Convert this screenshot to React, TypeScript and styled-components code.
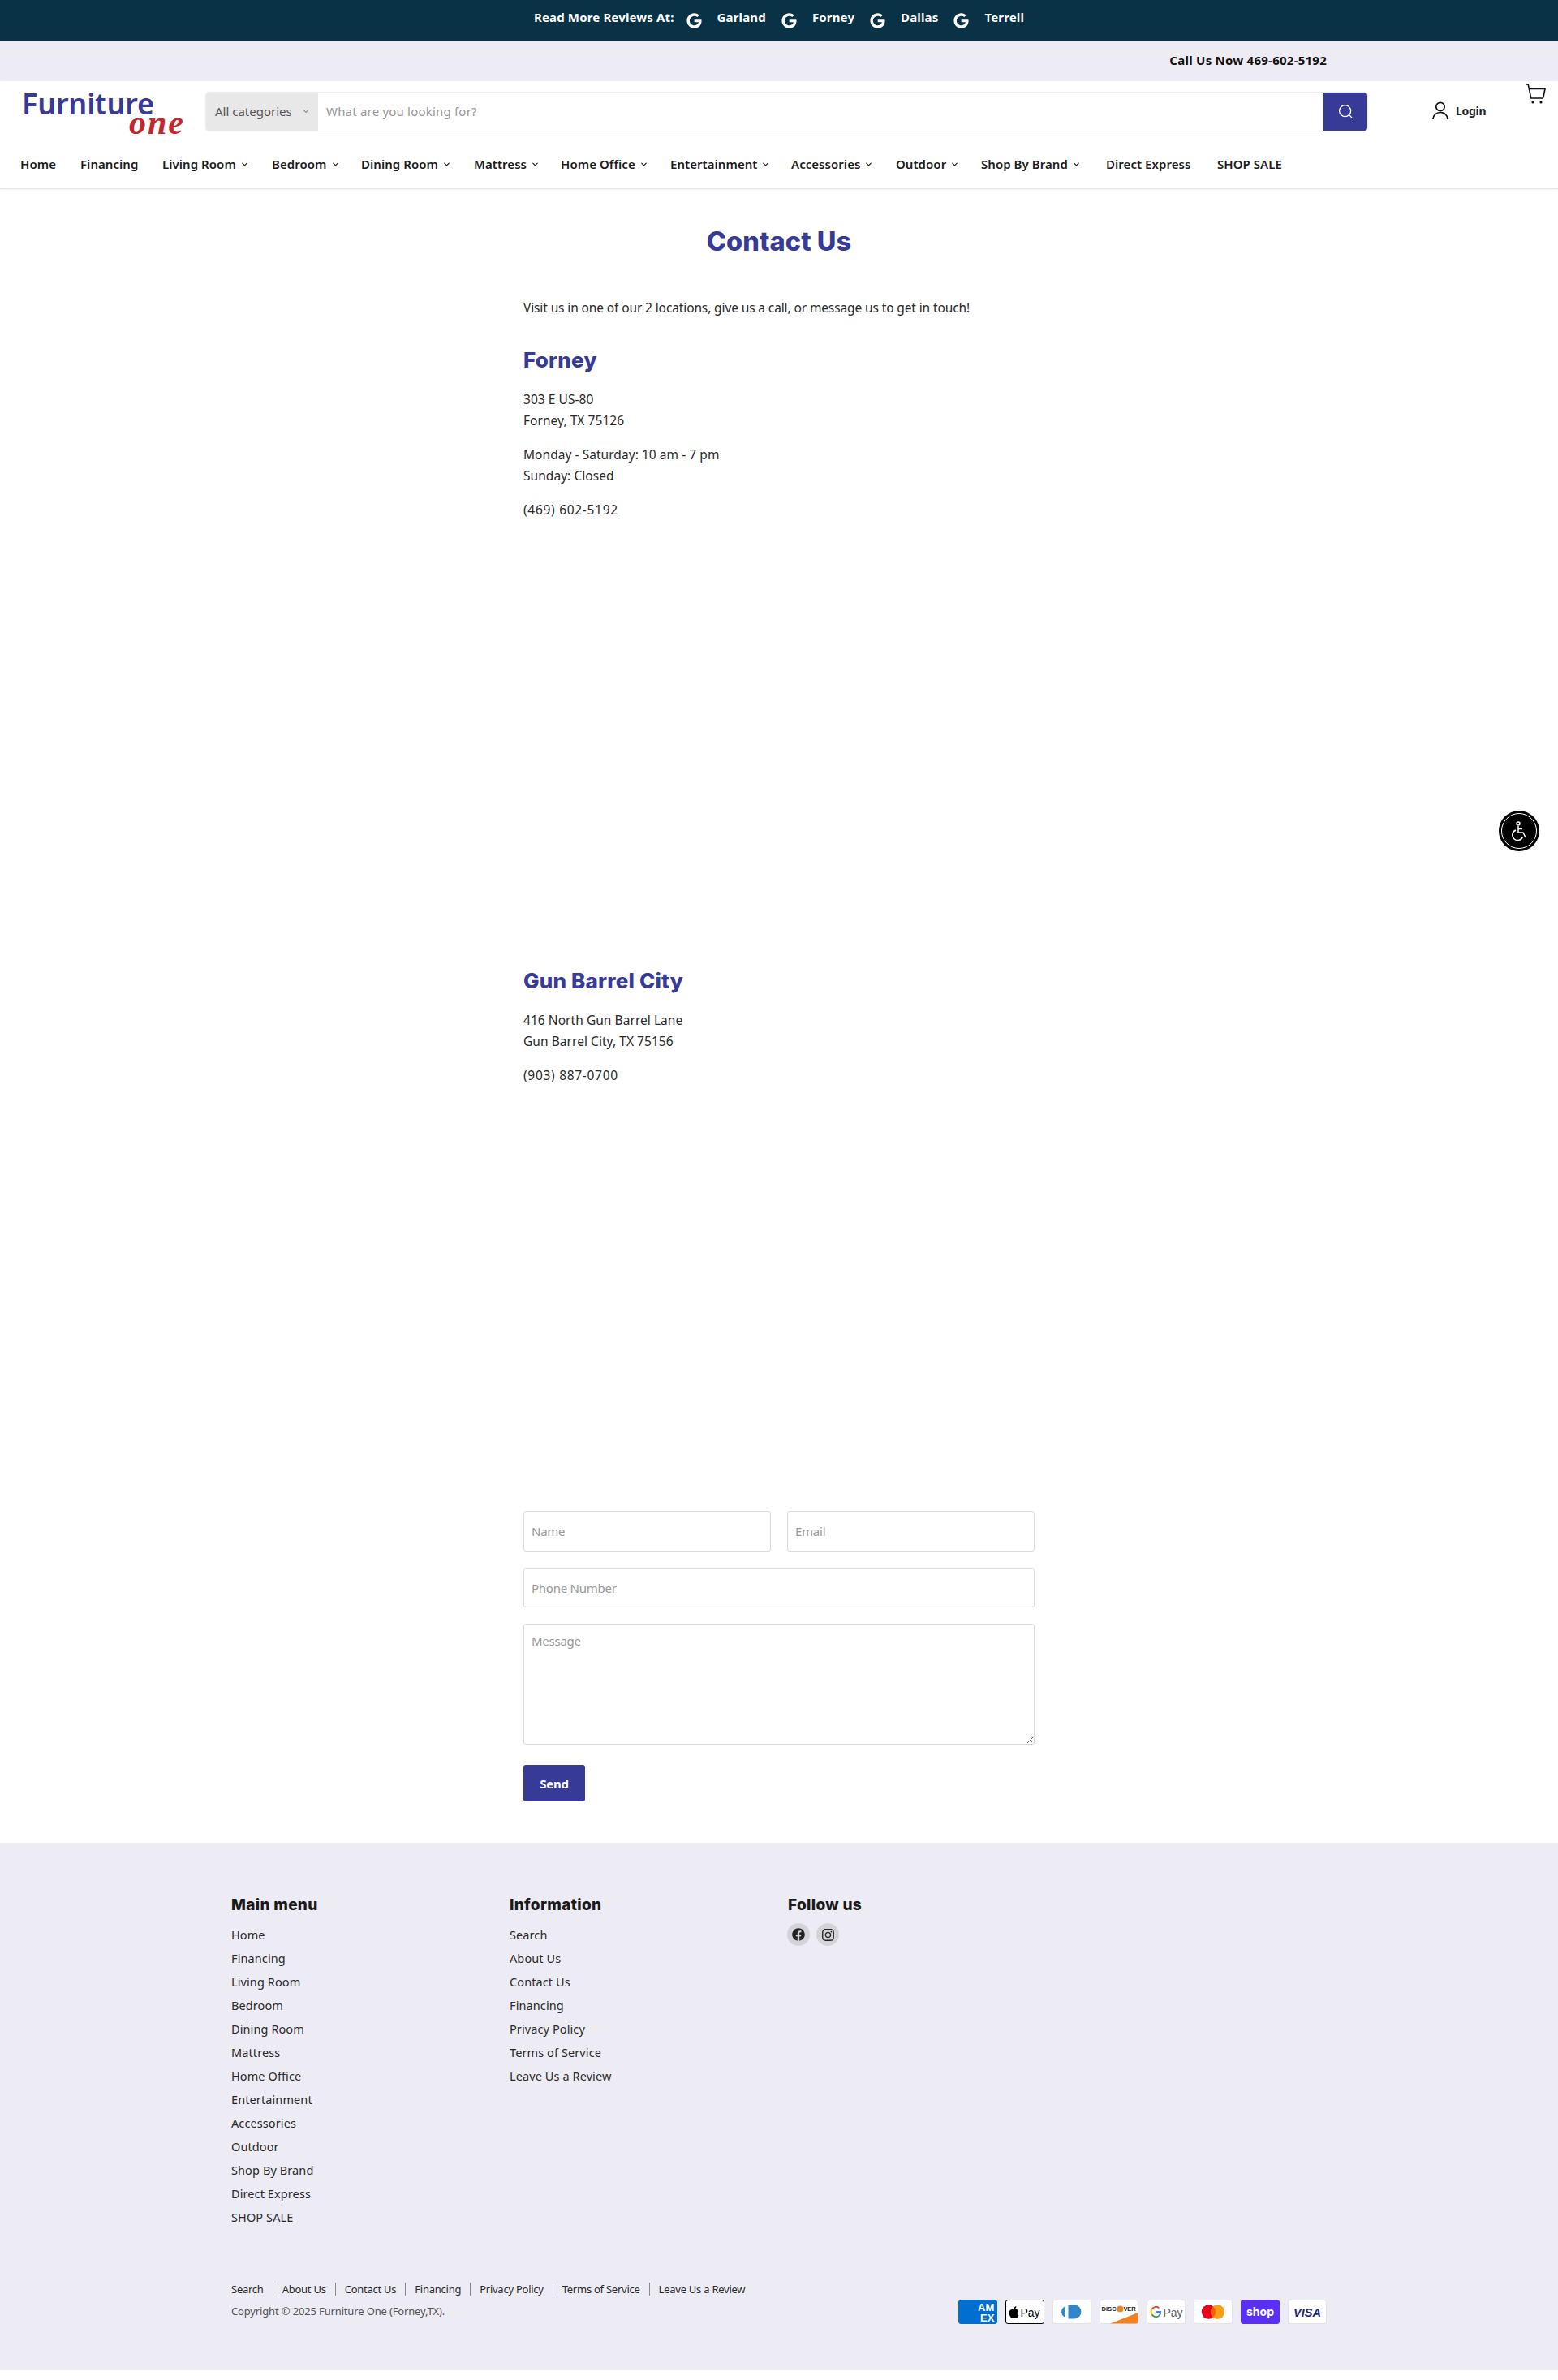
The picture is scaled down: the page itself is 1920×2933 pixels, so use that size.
import { ReactNode } from "react";
import styled, { createGlobalStyle } from "styled-components";
import { FaFacebook, FaGoogle, FaInstagram } from "react-icons/fa";
import { ChevronDown, Search as SearchIcon } from "lucide-react";

const PRIMARY = "#373a96";
const LAVENDER = "#edecf5";
const BODY_FONT = `"Noto Sans", "Open Sans", sans-serif`;
const HEAD_FONT = `Inter, "Noto Sans", sans-serif`;

const GlobalStyle = createGlobalStyle`
  html, body { margin: 0; padding: 0; background: #fff; }
  body { font-family: ${BODY_FONT}; color: #222; font-size: 15px; }
  * { box-sizing: border-box; }
  input::placeholder, textarea::placeholder { color: #999; opacity: 1; }
`;

const Page = styled.div`
  position: relative;
  width: 1920px;
  height: 2933px;
  background: #fff;
`;

const ReviewBar = styled.div`
  height: 50px;
  background: #0a3246;
  color: #fff;
  display: flex;
  justify-content: center;
  padding-top: 12px;
  font-size: 15px;
  font-weight: 700;
  line-height: 18px;
  letter-spacing: 0.15px;
`;

const ReviewLabel = styled.span`
  margin-right: 15px;
`;

const ReviewLink = styled.span`
  display: flex;
  gap: 19px;
  margin-right: 19px;
  &:last-child { margin-right: 0; }
  svg { margin-top: 4px; }
`;

const CallBar = styled.div`
  height: 50px;
  background: ${LAVENDER};
  display: flex;
  justify-content: flex-end;
  align-items: center;
  padding-right: 285px;
  padding-bottom: 3px;
  font-size: 15px;
  font-weight: 700;
  letter-spacing: 0.25px;
  color: #111;
`;

const Header = styled.header`
  height: 133px;
  border-bottom: 1px solid #e6e6e6;
  box-shadow: 0 1px 3px rgba(0, 0, 0, 0.06);
`;

const HeaderRow = styled.div`
  display: flex;
  height: 61px;
  padding-left: 27px;
  padding-top: 14px;
`;

const Logo = styled.div`
  width: 201px;
  flex: none;
  display: flex;
  flex-direction: column;
  margin-top: -1px;
`;

const LogoWord = styled.span`
  font-family: "Noto Sans", sans-serif;
  font-size: 36px;
  font-weight: 600;
  line-height: 30px;
  letter-spacing: -0.2px;
  color: ${PRIMARY};
`;

const LogoOne = styled.span`
  align-self: flex-end;
  margin-top: -2px;
  font-family: "Liberation Serif", serif;
  font-style: italic;
  font-weight: 700;
  font-size: 42px;
  line-height: 21px;
  letter-spacing: 2px;
  color: #c1272d;
`;

const SearchBar = styled.div`
  width: 1431px;
  height: 47px;
  margin-left: 26px;
  display: flex;
  border-radius: 4px;
  box-shadow: 0 0 2px rgba(0, 0, 0, 0.25);
  overflow: hidden;
`;

const CategorySelect = styled.div`
  width: 138px;
  background: #e8e8e8;
  color: #555;
  font-size: 15px;
  display: flex;
  align-items: center;
  justify-content: space-between;
  padding: 0 9px 2px 11px;
`;

const SearchInput = styled.input`
  flex: 1;
  border: none;
  outline: none;
  padding: 0 10px 2px;
  font-family: ${BODY_FONT};
  font-size: 15px;
  letter-spacing: 0.2px;
`;

const SearchButton = styled.div`
  width: 54px;
  background: ${PRIMARY};
  color: #fff;
  display: flex;
  align-items: center;
  justify-content: center;
`;

const LoginLink = styled.div`
  display: flex;
  align-items: center;
  gap: 9px;
  height: 44px;
  margin-left: 80px;
  font-size: 14px;
  font-weight: 700;
  letter-spacing: -0.3px;
`;

const CartLink = styled.div`
  margin-left: 49px;
  margin-top: -11px;
`;

const Nav = styled.nav`
  display: flex;
  padding-left: 25px;
  margin-top: 29px;
  line-height: 24px;
  font-size: 15px;
  font-weight: 600;
  letter-spacing: 0.05px;
  color: #1c1c1c;
`;

const NavItem = styled.span<{ $width: number }>`
  display: flex;
  align-items: center;
  gap: 5px;
  width: ${(p) => p.$width}px;
  flex: none;
  white-space: nowrap;
`;

const Main = styled.main`
  width: 630px;
  margin: 0 auto;
  font-size: 15.5px;
  line-height: 26px;
  letter-spacing: 0.05px;
  color: #2a2a2a;
`;

const Title = styled.h1`
  margin: 45px 0 48px;
  text-align: center;
  font-family: ${HEAD_FONT};
  font-size: 32.5px;
  line-height: 40px;
  font-weight: 800;
  color: ${PRIMARY};
`;

const Text = styled.p<{ $numeric?: boolean }>`
  margin: 0 0 16px;
  letter-spacing: ${(p) => (p.$numeric ? "0.7px" : "inherit")};
`;

const Intro = styled(Text)`
  margin-bottom: 37px;
  letter-spacing: -0.12px;
`;

const LocationName = styled.h2`
  margin: 0 0 20px;
  font-family: ${HEAD_FONT};
  font-size: 26px;
  line-height: 30px;
  font-weight: 800;
  letter-spacing: 0.2px;
  color: ${PRIMARY};
`;

// the embedded maps did not load in the screenshot, they are blank space
const MapFrame = styled.div<{ $height: number }>`
  height: ${(p) => p.$height}px;
`;

const ContactForm = styled.form`
  display: grid;
  grid-template-columns: 1fr 1fr;
  column-gap: 20px;
  row-gap: 20px;
`;

const Field = styled.input<{ $wide?: boolean }>`
  height: ${(p) => (p.$wide ? 49 : 50)}px;
  width: 100%;
  grid-column: ${(p) => (p.$wide ? "1 / span 2" : "auto")};
  border: 1px solid #dcdcdc;
  border-radius: 3px;
  padding: 0 9px;
  font-family: ${BODY_FONT};
  font-size: 15px;
  letter-spacing: -0.25px;
  outline: none;
`;

const MessageField = styled.textarea`
  display: block;
  grid-column: 1 / span 2;
  height: 149px;
  width: 100%;
  border: 1px solid #dcdcdc;
  border-radius: 3px;
  padding: 10px 9px;
  font-family: ${BODY_FONT};
  font-size: 15px;
  letter-spacing: -0.25px;
  outline: none;
`;

const SendButton = styled.button`
  grid-column: 1;
  width: 76px;
  height: 45px;
  margin-top: 5px;
  border: none;
  border-radius: 3px;
  background: ${PRIMARY};
  color: #fff;
  font-family: ${BODY_FONT};
  font-size: 15px;
  font-weight: 700;
  letter-spacing: -0.2px;
`;

const Footer = styled.footer`
  height: 650px;
  margin-top: 51px;
  background: ${LAVENDER};
  padding: 65px 285px 0;
  color: #2a2a2a;
`;

const FooterColumns = styled.div`
  display: grid;
  grid-template-columns: 343px 343px 1fr;
  height: 477px;
`;

const FooterHeading = styled.h3`
  margin: 0 0 10px;
  font-family: ${HEAD_FONT};
  font-size: 19px;
  line-height: 24px;
  font-weight: 800;
  letter-spacing: 0.3px;
  color: #1a1a1a;
`;

const FooterList = styled.ul`
  list-style: none;
  margin: 0;
  padding: 0;
  font-size: 14.5px;
  line-height: 29px;
  letter-spacing: 0.1px;
`;

const SocialRow = styled.div`
  display: flex;
  gap: 8px;
  margin-top: 8px;
  margin-left: -1px;
`;

const SocialIcon = styled.span`
  width: 28px;
  height: 28px;
  border-radius: 50%;
  background: #d4d4d8;
  color: #222;
  display: flex;
  align-items: center;
  justify-content: center;
`;

const FooterBottom = styled.div`
  display: flex;
  justify-content: space-between;
  align-items: flex-start;
`;

const BottomLinks = styled.div`
  display: flex;
  font-size: 13px;
  line-height: 16px;
  letter-spacing: -0.25px;
`;

const BottomLink = styled.span`
  padding: 0 11px;
  border-left: 1px solid #8a8a8a;
  &:first-child { padding-left: 0; border-left: none; }
`;

const Copyright = styled.div`
  margin-top: 11px;
  font-size: 13px;
  line-height: 16px;
  letter-spacing: -0.15px;
  color: #555;
`;

const Payments = styled.div`
  display: flex;
  gap: 10px;
  margin-top: 21px;
`;

const PayCard = styled.svg`
  display: block;
  width: 48px;
  height: 30px;
`;

const A11yButton = styled.div`
  position: absolute;
  top: 999px;
  left: 1847px;
  width: 50px;
  height: 50px;
  border-radius: 50%;
  background: #000;
  display: flex;
  align-items: center;
  justify-content: center;
  &::after {
    content: "";
    position: absolute;
    inset: 3px;
    border: 1.5px solid #fff;
    border-radius: 50%;
  }
`;

const navItems: [string, number, boolean][] = [
  ["Home", 74, false],
  ["Financing", 101, false],
  ["Living Room", 135, true],
  ["Bedroom", 110, true],
  ["Dining Room", 139, true],
  ["Mattress", 107, true],
  ["Home Office", 135, true],
  ["Entertainment", 149, true],
  ["Accessories", 129, true],
  ["Outdoor", 105, true],
  ["Shop By Brand", 154, true],
  ["Direct Express", 137, false],
  ["SHOP SALE", 105, false],
];

const mainMenu = [
  "Home", "Financing", "Living Room", "Bedroom", "Dining Room", "Mattress", "Home Office",
  "Entertainment", "Accessories", "Outdoor", "Shop By Brand", "Direct Express", "SHOP SALE",
];

const infoMenu = [
  "Search", "About Us", "Contact Us", "Financing", "Privacy Policy", "Terms of Service", "Leave Us a Review",
];

const Card = ({ children, bg = "#fff", border = "#e2e2e8" }: { children: ReactNode; bg?: string; border?: string }) => (
  <PayCard viewBox="0 0 48 30">
    <rect x="0.5" y="0.5" width="47" height="29" rx="2.5" fill={bg} stroke={border} />
    {children}
  </PayCard>
);

const PaymentIcons = () => (
  <Payments>
    <Card bg="#016fd0" border="#016fd0">
      <text x="24" y="14" fontFamily="Liberation Sans" fontWeight="700" fontSize="13" fill="#fff">AM</text>
      <text x="27" y="27" fontFamily="Liberation Sans" fontWeight="700" fontSize="13" fill="#fff">EX</text>
    </Card>
    <Card border="#000">
      <path d="M12.6 10.6c.6-.7.9-1.5.8-2.4-.8 0-1.7.5-2.2 1.1-.5.6-.9 1.4-.8 2.2.8.1 1.7-.3 2.2-.9zM13.4 11.8c-1.2-.1-2.2.7-2.8.7s-1.5-.7-2.4-.6c-1.2 0-2.4.7-3 1.8-1.3 2.2-.3 5.5.9 7.3.6.9 1.4 1.9 2.3 1.8.9 0 1.3-.6 2.4-.6s1.4.6 2.4.6 1.6-.9 2.2-1.8c.7-1 1-2 1-2-1.9-.9-2.3-3.9-.3-5.1-.8-1.2-1.9-2-2.7-2.1z" fill="#000" />
      <text x="18.5" y="21" fontFamily="Liberation Sans" fontSize="14" fill="#000">Pay</text>
    </Card>
    <Card>
      <path d="M15.5 8.5a7 7 0 0 0 0 13z" fill="#3086c8" />
      <path d="M19.5 6.5h7.5a8.5 8.5 0 0 1 0 17h-7.5z" fill="#3086c8" />
    </Card>
    <Card>
      <path d="M13 29.5 L47.5 16 V27 a2.5 2.5 0 0 1 -2.5 2.5 Z" fill="#f48120" />
      <text x="2.5" y="14" fontFamily="Liberation Sans" fontWeight="700" fontSize="7.6" fill="#222">DISC</text>
      <circle cx="25.5" cy="11.4" r="3.9" fill="#f48120" />
      <text x="29.5" y="14" fontFamily="Liberation Sans" fontWeight="700" fontSize="7.6" fill="#222" letterSpacing="-0.2">VER</text>
    </Card>
    <Card>
      <path d="M6.6 11.8A5.6 5.6 0 0 1 15.3 10.2" fill="none" stroke="#ea4335" strokeWidth="1.9" />
      <path d="M6.6 18.2A5.6 5.6 0 0 1 6.6 11.8" fill="none" stroke="#fbbc04" strokeWidth="1.9" />
      <path d="M15.3 19.8A5.6 5.6 0 0 1 6.6 18.2" fill="none" stroke="#34a853" strokeWidth="1.9" />
      <path d="M11.8 15H17.2A5.6 5.6 0 0 1 15.3 19.8" fill="none" stroke="#4285f4" strokeWidth="1.9" />
      <text x="20.5" y="20.5" fontFamily="Liberation Sans" fontSize="14" fill="#5f6368">Pay</text>
    </Card>
    <Card>
      <circle cx="18.5" cy="15" r="8.7" fill="#eb001b" />
      <circle cx="29.5" cy="15" r="8.7" fill="#f79e1b" />
      <path d="M24 8.3a8.7 8.7 0 0 1 0 13.4a8.7 8.7 0 0 1 0-13.4z" fill="#ff5f00" />
    </Card>
    <Card bg="#5a31f4" border="#5a31f4">
      <text x="24" y="20" textAnchor="middle" fontFamily="Inter" fontWeight="700" fontSize="14" fill="#fff">shop</text>
    </Card>
    <Card>
      <text x="24" y="20.5" textAnchor="middle" fontFamily="Liberation Sans" fontWeight="700" fontStyle="italic" fontSize="14.5" fill="#1a2a78">VISA</text>
    </Card>
  </Payments>
);

const App = () => {
  return (
    <Page>
      <GlobalStyle />
      <ReviewBar>
        <ReviewLabel>Read More Reviews At:</ReviewLabel>
        {["Garland", "Forney", "Dallas", "Terrell"].map((city) => (
          <ReviewLink key={city}>
            <FaGoogle size={19} />
            {city}
          </ReviewLink>
        ))}
      </ReviewBar>
      <CallBar>Call Us Now 469-602-5192</CallBar>

      <Header>
        <HeaderRow>
          <Logo>
            <LogoWord>Furniture</LogoWord>
            <LogoOne>one</LogoOne>
          </Logo>
          <SearchBar>
            <CategorySelect>
              All categories
              <ChevronDown size={12} strokeWidth={2} />
            </CategorySelect>
            <SearchInput placeholder="What are you looking for?" />
            <SearchButton>
              <SearchIcon size={21} strokeWidth={1.5} />
            </SearchButton>
          </SearchBar>
          <LoginLink>
            <svg width="20" height="22" viewBox="0 0 20 22" fill="none" stroke="#111" strokeWidth="1.7">
              <circle cx="10" cy="6.5" r="5.2" />
              <path d="M1 22c0-5 4-8.5 9-8.5s9 3.5 9 8.5" />
            </svg>
            Login
          </LoginLink>
          <CartLink>
            <svg width="25" height="25" viewBox="0 0 25 25" fill="none" stroke="#111" strokeWidth="1.6">
              <path d="M1 1h2.2l3.6 17h14.5" />
              <path d="M4.4 6.5H24l-2.2 11" />
              <circle cx="9" cy="23" r="0.8" fill="#111" />
              <circle cx="19" cy="23" r="0.8" fill="#111" />
            </svg>
          </CartLink>
        </HeaderRow>
        <Nav>
          {navItems.map(([label, width, hasMenu]) => (
            <NavItem key={label} $width={width}>
              {label}
              {hasMenu && <ChevronDown size={11} strokeWidth={2.6} />}
            </NavItem>
          ))}
        </Nav>
      </Header>

      <Main>
        <Title>Contact Us</Title>
        <Intro>Visit us in one of our 2 locations, give us a call, or message us to get in touch!</Intro>

        <LocationName>Forney</LocationName>
        <Text>
          303 E US-80
          <br />
          Forney, TX 75126
        </Text>
        <Text>
          Monday - Saturday: 10 am - 7 pm
          <br />
          Sunday: Closed
        </Text>
        <Text $numeric>(469) 602-5192</Text>
        <MapFrame $height={537} />

        <LocationName>Gun Barrel City</LocationName>
        <Text>
          416 North Gun Barrel Lane
          <br />
          Gun Barrel City, TX 75156
        </Text>
        <Text $numeric>(903) 887-0700</Text>
        <MapFrame $height={508} />

        <ContactForm>
          <Field placeholder="Name" />
          <Field placeholder="Email" />
          <Field $wide placeholder="Phone Number" />
          <MessageField placeholder="Message" />
          <SendButton type="button">Send</SendButton>
        </ContactForm>
      </Main>

      <Footer>
        <FooterColumns>
          <div>
            <FooterHeading>Main menu</FooterHeading>
            <FooterList>
              {mainMenu.map((item) => (
                <li key={item}>{item}</li>
              ))}
            </FooterList>
          </div>
          <div>
            <FooterHeading>Information</FooterHeading>
            <FooterList>
              {infoMenu.map((item) => (
                <li key={item}>{item}</li>
              ))}
            </FooterList>
          </div>
          <div>
            <FooterHeading>Follow us</FooterHeading>
            <SocialRow>
              <SocialIcon>
                <FaFacebook size={16} />
              </SocialIcon>
              <SocialIcon>
                <FaInstagram size={17} />
              </SocialIcon>
            </SocialRow>
          </div>
        </FooterColumns>
        <FooterBottom>
          <div>
            <BottomLinks>
              {infoMenu.map((item) => (
                <BottomLink key={item}>{item}</BottomLink>
              ))}
            </BottomLinks>
            <Copyright>Copyright © 2025 Furniture One (Forney,TX).</Copyright>
          </div>
          <PaymentIcons />
        </FooterBottom>
      </Footer>

      <A11yButton>
        <svg width="26" height="26" viewBox="0 0 26 26" fill="none" stroke="#fff" strokeWidth="1.5">
          <circle cx="12" cy="4" r="2" />
          <path d="M12 7v8h6l3 6" />
          <path d="M12 10.5h5" />
          <path d="M9 12a6.5 6.5 0 1 0 8.5 8" />
        </svg>
      </A11yButton>
    </Page>
  );
};

export default App;
